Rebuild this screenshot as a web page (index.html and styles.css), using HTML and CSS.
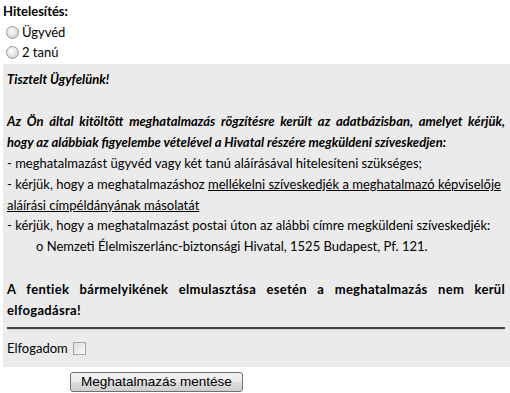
FILE: index.html
```
<!DOCTYPE html>
<html lang="hu">
  <head>
    <meta charset="UTF-8" />
    <meta name="viewport" content="width=device-width, initial-scale=1.0" />
    <title>Meghatalmazás</title>
    <link rel="stylesheet" href="styles.css">
  </head>
  <body>
    <div class="auth">
      <div class="authTitle">Hitelesítés:</div>
      <label class="opt"><input type="radio" name="hitel" class="radio" /> Ügyvéd</label>
      <label class="opt"><input type="radio" name="hitel" class="radio" /> 2 tanú</label>
    </div>

    <div class="notice">
      <p class="greet">Tisztelt Ügyfelünk!</p>
      <p class="intro">
        Az Ön által kitöltött meghatalmazás rögzítésre került az adatbázisban, amelyet kérjük,
        hogy az alábbiak figyelembe vételével a Hivatal részére megküldeni szíveskedjen:
      </p>
      <div class="rules">
        <div>- meghatalmazást ügyvéd vagy két tanú aláírásával hitelesíteni szükséges;</div>
        <div>- kérjük, hogy a meghatalmazáshoz <u>mellékelni szíveskedjék a meghatalmazó képviselője aláírási címpéldányának másolatát</u></div>
        <div>- kérjük, hogy a meghatalmazást postai úton az alábbi címre megküldeni szíveskedjék:</div>
        <div class="addr">o Nemzeti Élelmiszerlánc-biztonsági Hivatal, 1525 Budapest, Pf. 121.</div>
      </div>
      <p class="warn">A fentiek bármelyikének elmulasztása esetén a meghatalmazás nem kerül elfogadásra!</p>
      <hr class="sep" />
      <label class="accept">Elfogadom <input type="checkbox" class="check" /></label>
    </div>

    <div class="actions">
      <button class="saveBtn">Meghatalmazás mentése</button>
    </div>
  </body>
</html>
```
FILE: styles.css
```
* {
  margin: 0;
  padding: 0;
  box-sizing: border-box;
}
body {
  margin: 0 0 0 3px;
  font-family: Lato, "Liberation Sans", sans-serif;
  font-size: 13px;
  line-height: 21px;
  color: #000;
  background: #fff;
}
.auth {
  padding-top: 1px;
}
.authTitle {
  font-weight: bold;
}
.opt {
  display: flex;
  align-items: center;
  gap: 3px;
  height: 20px;
}
.radio {
  appearance: none;
  width: 13px;
  height: 13px;
  margin-left: 3px;
  border-radius: 50%;
  border: 1px solid #9a9a9a;
  background: radial-gradient(circle at 40% 35%, #fff 0%, #e6e6e6 45%, #c4c4c4 100%);
}
.notice {
  background-color: #ebebeb;
  margin-top: 2px;
  padding: 5px 5px 8px 4px;
}
.greet,
.intro {
  font-weight: bold;
  font-style: italic;
}
.intro {
  margin-top: 21px;
  text-align: justify;
}
.rules {
  line-height: 20.75px;
}
.addr {
  padding-left: 29px;
}
.warn {
  font-weight: bold;
  margin-top: 22px;
  letter-spacing: 0.3px;
  text-align: justify;
}
.sep {
  border: none;
  border-top: 2px solid #444;
  border-bottom: 1px solid #d8d8d8;
  margin: 6px 0 8px 0;
}
.accept {
  display: flex;
  align-items: center;
  gap: 5px;
}
.check {
  appearance: none;
  width: 13px;
  height: 13px;
  border: 1px solid #a8a8a8;
  background: linear-gradient(135deg, #dcdcdc, #fafafa);
}
.actions {
  padding: 4px 0 0 67px;
}
.saveBtn {
  font-family: "Liberation Sans", Arial, sans-serif;
  font-size: 13.5px;
  line-height: 16px;
  padding: 1px 10px;
  border: 1px solid #707070;
  border-radius: 3px;
  background: linear-gradient(#f2f2f2 0%, #ebebeb 50%, #dddddd 51%, #cfcfcf 100%);
  color: #000;
}
```
